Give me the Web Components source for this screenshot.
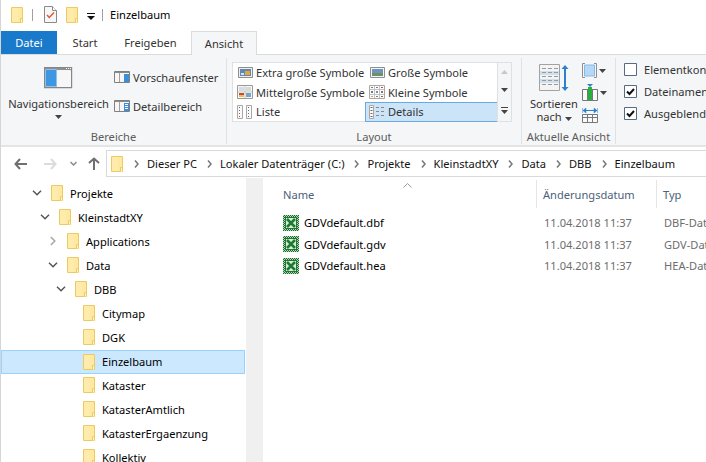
<!doctype html>
<html lang="de">
<head>
<meta charset="utf-8">
<title>Einzelbaum</title>
<style>
  html, body { margin: 0; height: 100%; overflow: hidden; background: #fff; }
  body { font: 11.1px "Noto Sans", sans-serif; }
</style>
</head>
<body>
<win-explorer>
  <title-bar slot="top" heading="Einzelbaum"></title-bar>
  <ribbon-tabs slot="top"></ribbon-tabs>
  <view-ribbon slot="top"></view-ribbon>
  <address-bar slot="top" path="Dieser PC|Lokaler Datenträger (C:)|Projekte|KleinstadtXY|Data|DBB|Einzelbaum"></address-bar>
  <nav-tree slot="left">
    <tree-row level="0" arrow="open">Projekte</tree-row>
    <tree-row level="1" arrow="open">KleinstadtXY</tree-row>
    <tree-row level="2" arrow="closed">Applications</tree-row>
    <tree-row level="2" arrow="open">Data</tree-row>
    <tree-row level="3" arrow="open">DBB</tree-row>
    <tree-row level="4">Citymap</tree-row>
    <tree-row level="4">DGK</tree-row>
    <tree-row level="4" selected>Einzelbaum</tree-row>
    <tree-row level="4">Kataster</tree-row>
    <tree-row level="4">KatasterAmtlich</tree-row>
    <tree-row level="4">KatasterErgaenzung</tree-row>
    <tree-row level="4">Kollektiv</tree-row>
  </nav-tree>
  <file-list slot="right">
    <file-row date="11.04.2018 11:37" type="DBF-Datei">GDVdefault.dbf</file-row>
    <file-row date="11.04.2018 11:37" type="GDV-Datei">GDVdefault.gdv</file-row>
    <file-row date="11.04.2018 11:37" type="HEA-Datei">GDVdefault.hea</file-row>
  </file-list>
</win-explorer>

<script>
const ICONS = {
  folder: `<svg width="13" height="16" viewBox="0 0 13 16"><path d="M.5.5h11v15H.5z" fill="#ffe9a0" stroke="#eccb62"/><path d="M1 1h6v14H1z" fill="#fff0b8" opacity=".5"/><path d="M9.500 15.500v-4h2v4" fill="#fff6d0" stroke="#eccb62"/></svg>`,
  doc: `<svg width="13" height="17" viewBox="0 0 13 17"><path d="M.5.5h8l4 4v12H.5z" fill="#f7f7f7" stroke="#8a8a8a"/><path d="M8.500.5v4h4" fill="#fff" stroke="#8a8a8a"/><path d="M3 9l2.300 2.400L10 6.500" fill="none" stroke="#e4572e" stroke-width="1.500"/></svg>`,
  qat: `<svg width="8" height="7" viewBox="0 0 8 7"><path d="M0 0h8v1H0z" fill="#111"/><path d="M0 3h8L4 7z" fill="#111"/></svg>`,
  nav: `<svg width="29" height="22" viewBox="0 0 29 22"><path d="M.5.5h27v20H.5z" fill="#f4f4f4" stroke="#868686" stroke-width="1.400"/><path d="M1 1h26v2H1z" fill="#8f8f8f"/><path d="M1.500 2.500h11v17h-11z" fill="#3f97e3" stroke="#8ec0ee"/><path d="M13 4h14v16H13z" fill="#f7f7f7"/><path d="M22 1h1v1h-1zM24 1h1v1h-1zM26 1h1v1h-1z" fill="#fff"/></svg>`,
  preview: `<svg width="16" height="12" viewBox="0 0 16 12"><path d="M.5.5h15v11H.5z" fill="#f6f6f6" stroke="#808080"/><path d="M1 1h14v1H1z" fill="#8a8a8a"/><path d="M5.500 2v9" stroke="#a0a0a0"/><path d="M10 3h5v8h-5z" fill="#3a8edb"/></svg>`,
  detail: `<svg width="16" height="12" viewBox="0 0 16 12"><path d="M.5.5h15v11H.5z" fill="#f6f6f6" stroke="#808080"/><path d="M1 1h14v1H1z" fill="#8a8a8a"/><path d="M5.500 2v9" stroke="#a0a0a0"/><path d="M10 3h5v8h-5z" fill="#3a8edb"/><path d="M11 4.500h3M11 6.500h3M11 8.500h3" stroke="#fff"/></svg>`,
  xl: `<svg width="15" height="11" viewBox="0 0 15 11"><path d="M.5.5h14v10H.5z" fill="#f1eee2" stroke="#8a8f94"/><path d="M2 2h11v7H2z" fill="#5d89b8"/><path d="M7 4h5v4H7z" fill="#e9a43a"/><path d="M3 6h3v2H3z" fill="#d8e4ee"/></svg>`,
  large: `<svg width="15" height="11" viewBox="0 0 15 11"><path d="M.5.5h14v10H.5z" fill="#f6f6f6" stroke="#8a8f94"/><path d="M2 2h11v4H2z" fill="#6d94ba"/><path d="M2 6h11v3H2z" fill="#6f8f6a"/></svg>`,
  medium: `<svg width="16" height="14" viewBox="0 0 16 14"><path d="M.5.5h15v13H.5z" fill="#f7f7f7" stroke="#9a9a9a"/><path d="M8 1v12M1 7h14" stroke="#c8c8c8"/><path d="M2 2h5v4H2z" fill="#d4dde6"/><path d="M9 2h5v4H9z" fill="#cfe0d0"/><path d="M2 8h5v2H2z" fill="#c84b3a"/><path d="M9 8h5v4H9z" fill="#7ea3c7"/><path d="M2 10h5v2H2z" fill="#e8c24a"/></svg>`,
  small: `<svg width="16" height="14" viewBox="0 0 16 14"><path d="M.5.500h15v13H.5z" fill="#fbfbfb" stroke="#a8a8a8"/><path d="M5.500 1v12M10.500 1v12M1 4.500h14M1 9.500h14" stroke="#c4c4c4"/><path d="M2 2h2v1H2zM7 2h2v1H7z" fill="#7b7b7b"/><path d="M12 2h2v1h-2z" fill="#c84b3a"/><path d="M2 6h2v2H2zM12 6h2v2h-2z" fill="#7b7b7b"/><path d="M7 6h2v2H7z" fill="#6d94ba"/><path d="M2 11h2v1H2z" fill="#e0a63c"/><path d="M7 11h2v1H7z" fill="#6f8f6a"/><path d="M12 11h2v1h-2z" fill="#c84b3a"/></svg>`,
  list: `<svg width="16" height="14" viewBox="0 0 16 14"><path d="M.5.500h5v13h-5zM9.500.500h5v13h-5z" fill="#fafafa" stroke="#a8a8a8"/><path d="M2 2h1v1H2zM2 5h1v1H2zM11 2h1v1h-1zM11 5h1v1h-1z" fill="#666"/><path d="M2 8h1v1H2zM11 8h1v1h-1z" fill="#c84b3a"/><path d="M2 11h1v1H2zM11 11h1v1h-1z" fill="#666"/></svg>`,
  details: `<svg width="16" height="14" viewBox="0 0 16 14"><path d="M.5.500h4v13h-4z" fill="#fafafa" stroke="#a8a8a8"/><path d="M1.500 2h2v1h-2zM1.500 5h2v1h-2zM1.500 11h2v1h-2z" fill="#666"/><path d="M1.500 8h2v1h-2z" fill="#c84b3a"/><path d="M7 2.500h3M12 2.500h3M7 6.500h3M12 6.500h3M7 10.500h3M12 10.500h3" stroke="#8a8a8a"/></svg>`,
  sort: `<svg width="30" height="28" viewBox="0 0 30 28"><path d="M.5.500h20v26H.5z" fill="#f4f4f4" stroke="#a2a2a2"/><path d="M1 7h19v4H1zM1 15h19v4H1z" fill="#cfe0ee"/><path d="M3 4.500h4M9 4.500h4M15 4.500h4M3 8.500h4M9 8.500h4M15 8.500h4M3 12.500h4M9 12.500h4M15 12.500h4M3 16.500h4M9 16.500h4M15 16.500h4M3 20.500h4M9 20.500h4M15 20.500h4" stroke="#9a9a9a"/><path d="M26 2v24" stroke="#2f80c8" stroke-width="2"/><path d="M22.500 5L26 1l3.500 4zM22.500 23l3.500 4 3.500-4z" fill="#2f80c8"/></svg>`,
  panel: `<svg width="15" height="15" viewBox="0 0 15 15"><path d="M2.500 2h10v11h-10z" fill="#b5d8f7" stroke="#8ab9e3"/><path d="M3 .5H.5v14H3M12 .5h2.500v14H12" fill="none" stroke="#8f8f8f"/></svg>`,
  columns: `<svg width="16" height="17" viewBox="0 0 16 17"><path d="M.5 5.500h15v11H.5z" fill="#fafafa" stroke="#777"/><path d="M5.500 5v12M10.500 5v12" stroke="#777"/><path d="M6 3h4v13H6z" fill="#27b13c"/><path d="M5 0h6L8 3z" fill="#2f80c8"/></svg>`,
  fit: `<svg width="16" height="16" viewBox="0 0 16 16"><path d="M.5 7.500h15v8H.5z" fill="#fafafa" stroke="#777"/><path d="M1 10.500h14M5.500 8v7M10.500 8v7" stroke="#777"/><path d="M1 3.500h14" stroke="#2f80c8"/><path d="M4 1v5L1 3.500zM12 1v5l3-2.500zM.5 1v5M15.500 1v5" fill="#2f80c8" stroke="#2f80c8" stroke-width=".5"/></svg>`,
  up: `<svg width="7" height="4" viewBox="0 0 7 4"><path d="M0 4l3.500-4L7 4z" fill="#c8c8c8"/></svg>`,
  down: `<svg width="7" height="4" viewBox="0 0 7 4"><path d="M0 0h7L3.500 4z" fill="#444"/></svg>`,
  more: `<svg width="7" height="7" viewBox="0 0 7 7"><path d="M0 0h7v1H0z" fill="#444"/><path d="M0 3h7L3.500 7z" fill="#444"/></svg>`,
  back: `<svg width="13" height="12" viewBox="0 0 13 12"><path d="M6 1L1.500 6 6 11M2 6h11" fill="none" stroke="#6f6f6f" stroke-width="2"/></svg>`,
  fwd: `<svg width="13" height="12" viewBox="0 0 13 12"><path d="M7 1l4.500 5L7 11M0 6h11" fill="none" stroke="#dcdcdc" stroke-width="2"/></svg>`,
  recent: `<svg width="7" height="5" viewBox="0 0 7 5"><path d="M.5 1l3 3 3-3" fill="none" stroke="#8a8a8a" stroke-width="1.500"/></svg>`,
  upArrow: `<svg width="12" height="13" viewBox="0 0 12 13"><path d="M1 6l5-4.500L11 6M6 2v11" fill="none" stroke="#6f6f6f" stroke-width="2"/></svg>`,
  crumb: `<svg width="5" height="8" viewBox="0 0 5 8"><path d="M1 .5L4 4 1 7.500" fill="none" stroke="#777" stroke-width="1.500"/></svg>`,
  open: `<svg width="10" height="6" viewBox="0 0 10 6"><path d="M1 .8l4 4 4-4" fill="none" stroke="#555" stroke-width="1.500"/></svg>`,
  closed: `<svg width="6" height="10" viewBox="0 0 6 10"><path d="M.8 1l4 4-4 4" fill="none" stroke="#a6a6a6" stroke-width="1.500"/></svg>`,
  sortCaret: `<svg width="9" height="5" viewBox="0 0 9 5"><path d="M.5 4.500l4-4 4 4" fill="none" stroke="#9a9a9a"/></svg>`,
  check: `<svg width="13" height="13" viewBox="0 0 13 13"><path d="M.5.500h12v12H.5z" fill="#fff" stroke="#5a6a80"/><path d="M3 6.500l2.500 2.500 4.500-5" fill="none" stroke="#111" stroke-width="2"/></svg>`,
  uncheck: `<svg width="13" height="13" viewBox="0 0 13 13"><path d="M.5.500h12v12H.5z" fill="#fff" stroke="#5a6a80"/></svg>`,
  excel: `<svg width="16" height="16" viewBox="0 0 16 16" shape-rendering="crispEdges"><defs><pattern id="d" width="2" height="2" patternUnits="userSpaceOnUse"><path d="M0 0h2v2H0z" fill="#146c2e"/><path d="M0 0h1v1H0zM1 1h1v1H1z" fill="#b8d8b0"/></pattern></defs><path d="M0 0h16v16H0z" fill="url(#d)"/><path d="M2 2h12v12H2z" fill="#1c7a34"/><path d="M3 3h10v10H3z" fill="#d9ecd4"/><path d="M4 4l8 8M12 4l-8 8" stroke="#1c7a34" stroke-width="2.500" shape-rendering="auto"/></svg>`
};

class UiIcon extends HTMLElement {
  connectedCallback() {
    if (this.shadowRoot) return;
    this.attachShadow({ mode: "open" }).innerHTML =
      `<style>:host{display:inline-flex;flex:none;line-height:0}</style>${ICONS[this.getAttribute("name")]}`;
  }
}

class WinExplorer extends HTMLElement {
  constructor() {
    super();
    this.attachShadow({ mode: "open" }).innerHTML = `
      <style>
        :host{display:flex;flex-direction:column;width:706px;height:462px;overflow:hidden;box-sizing:border-box;
          border-left:1px solid #d6d6d6;color:#000;background:#fff}
        .body{flex:1;display:grid;grid-template-columns:244px 18px 1fr;min-height:0}
        .track{background:#f0f0f0;margin-left:1px}
        .left{overflow:hidden;min-width:0}
      </style>
      <slot name="top"></slot>
      <div class="body">
        <div class="left"><slot name="left"></slot></div>
        <div class="track"></div>
        <div><slot name="right"></slot></div>
      </div>`;
  }
}

class TitleBar extends HTMLElement {
  connectedCallback() {
    this.attachShadow({ mode: "open" }).innerHTML = `
      <style>
        :host{display:flex;align-items:center;height:31px;padding:0 0 2px 10px;box-sizing:border-box}
        .sep{width:1px;height:12px;background:#a0a0a0}
      </style>
      <ui-icon name="folder"></ui-icon><i class="sep" style="margin:0 11px 0 8px"></i>
      <ui-icon name="doc"></ui-icon><ui-icon name="folder" style="margin-left:9px"></ui-icon>
      <ui-icon name="qat" style="margin:4px 0 0 8px"></ui-icon><i class="sep" style="margin:0 7px 0 7px"></i>
      <span>${this.getAttribute("heading")}</span>`;
  }
}

class RibbonTabs extends HTMLElement {
  connectedCallback() {
    this.attachShadow({ mode: "open" }).innerHTML = `
      <style>
        :host{display:flex;height:24px;box-sizing:border-box;border-bottom:1px solid #dadbdc;color:#333}
        div{display:flex;align-items:center;justify-content:center;height:23px;box-sizing:border-box}
        .file{width:56px;background:#1979ca;color:#fff}
        .start{width:56px}
        .share{width:78px;padding-right:3px}
        .view{width:66px;height:24px;background:#f5f6f7;border:1px solid #dadbdc;border-bottom:0}
      </style>
      <div class="file">Datei</div><div class="start">Start</div><div class="share">Freigeben</div><div class="view">Ansicht</div>`;
  }
}

class ViewRibbon extends HTMLElement {
  connectedCallback() {
    this.attachShadow({ mode: "open" }).innerHTML = `
      <style>
        :host{display:grid;grid-template-columns:226px 295px 94px 1fr;height:92px;box-sizing:border-box;
          background:#f5f6f7;border-bottom:2px solid #e4e5e6;color:#333;overflow:hidden;white-space:nowrap}
        .group{display:flex;flex-direction:column;margin:3px 0 1px;border-right:1px solid #e0e1e2;min-width:0}
        .main{flex:1;display:flex;min-height:0}
        .label{height:20px;line-height:15px;display:flex;align-items:flex-end;justify-content:center;color:#5c5c5c}
        .big{width:113px;display:flex;flex-direction:column;align-items:center;padding:9px 0 0 2px;box-sizing:border-box}
        .big .t{margin-top:7px;line-height:16px}
        .rows{display:flex;flex-direction:column;gap:17px;padding-top:13px}
        .r{display:flex;align-items:center;gap:3px;height:12px}
        .gallery{display:flex;margin:4px 0 0 5px;height:60px}
        .cells{width:265px;display:grid;grid-template-columns:132px 133px;grid-auto-rows:19.5px;background:#fff;
          border:1px solid #dfe0e1;border-right:0;box-sizing:border-box}
        .cell{display:flex;align-items:center;box-sizing:border-box;padding-left:4px}
        .cell ui-icon{width:16px;justify-content:center;margin-right:3px}
        .cell.on{background:#cce4f7;border:1px solid #6aa9e5;padding-left:3px}
        .scroll{width:15px;display:flex;flex-direction:column;align-items:center;justify-content:space-around;
          border:1px solid #dfe0e1;box-sizing:border-box}
        .sort{width:58px;display:flex;flex-direction:column;align-items:center;padding:6px 0 0 6px;box-sizing:border-box}
        .sort .t{text-align:center;line-height:13px;margin-top:5px}
        .tools{display:flex;flex-direction:column;gap:5px;padding:4px 0 0 2px}
        .tool{display:flex;align-items:center;gap:2px;height:17px}
        .checks{display:flex;flex-direction:column;gap:9px;padding:8px 0 0 8px}
        .check{display:flex;align-items:center;gap:7px;height:13px}
      </style>
      <section class="group">
        <div class="main">
          <div class="big"><ui-icon name="nav"></ui-icon><div class="t">Navigationsbereich</div><ui-icon name="down" style="margin-top:3px"></ui-icon></div>
          <div class="rows">
            <div class="r"><ui-icon name="preview"></ui-icon>Vorschaufenster</div>
            <div class="r"><ui-icon name="detail"></ui-icon>Detailbereich</div>
          </div>
        </div>
        <div class="label">Bereiche</div>
      </section>
      <section class="group">
        <div class="main">
          <div class="gallery">
            <div class="cells">
              <div class="cell"><ui-icon name="xl"></ui-icon>Extra große Symbole</div>
              <div class="cell"><ui-icon name="large"></ui-icon>Große Symbole</div>
              <div class="cell"><ui-icon name="medium"></ui-icon>Mittelgroße Symbole</div>
              <div class="cell"><ui-icon name="small"></ui-icon>Kleine Symbole</div>
              <div class="cell"><ui-icon name="list"></ui-icon>Liste</div>
              <div class="cell on"><ui-icon name="details"></ui-icon>Details</div>
            </div>
            <div class="scroll"><ui-icon name="up"></ui-icon><ui-icon name="down"></ui-icon><ui-icon name="more"></ui-icon></div>
          </div>
        </div>
        <div class="label">Layout</div>
      </section>
      <section class="group">
        <div class="main">
          <div class="sort"><ui-icon name="sort"></ui-icon><div class="t">Sortieren<br>nach <ui-icon name="down"></ui-icon></div></div>
          <div class="tools">
            <div class="tool"><ui-icon name="panel"></ui-icon><ui-icon name="down"></ui-icon></div>
            <div class="tool"><ui-icon name="columns"></ui-icon><ui-icon name="down"></ui-icon></div>
            <div class="tool"><ui-icon name="fit"></ui-icon></div>
          </div>
        </div>
        <div class="label">Aktuelle Ansicht</div>
      </section>
      <section class="checks">
        <div class="check"><ui-icon name="uncheck"></ui-icon>Elementkontrollkästchen</div>
        <div class="check"><ui-icon name="check"></ui-icon>Dateinamenerweiterungen</div>
        <div class="check"><ui-icon name="check"></ui-icon>Ausgeblendete Elemente</div>
      </section>`;
  }
}

class AddressBar extends HTMLElement {
  connectedCallback() {
    const crumbs = this.getAttribute("path").split("|")
      .map((p) => `<ui-icon name="crumb"></ui-icon><span>${p}</span>`).join("");
    this.attachShadow({ mode: "open" }).innerHTML = `
      <style>
        :host{display:flex;align-items:center;height:31px;padding:2px 0 0 13px;box-sizing:border-box}
        .box{flex:1;display:flex;align-items:center;height:27px;margin-left:6px;padding-left:4px;
          border:1px solid #d9d9d9;border-right:0;box-sizing:border-box;white-space:nowrap;overflow:hidden;color:#111}
        .box ui-icon{margin-right:8px}
        .box span{margin-right:10px}
        .box > ui-icon:first-child{margin-right:10px}
      </style>
      <ui-icon name="back"></ui-icon>
      <ui-icon name="fwd" style="margin-left:17px"></ui-icon>
      <ui-icon name="recent" style="margin-left:13px"></ui-icon>
      <ui-icon name="upArrow" style="margin-left:11px"></ui-icon>
      <div class="box"><ui-icon name="folder"></ui-icon>${crumbs}</div>`;
  }
}

class NavTree extends HTMLElement {
  constructor() {
    super();
    this.attachShadow({ mode: "open" }).innerHTML = `
      <style>:host{display:block;padding-top:4px}</style><slot></slot>`;
  }
}

class TreeRow extends HTMLElement {
  connectedCallback() {
    const level = +this.getAttribute("level");
    const arrow = this.getAttribute("arrow");
    this.attachShadow({ mode: "open" }).innerHTML = `
      <style>
        :host{display:flex;align-items:center;height:24px;box-sizing:border-box;white-space:nowrap;
          padding:0 0 2px ${31 + level * 8}px}
        :host([selected]){background:#cce8ff;border:1px solid #99d1ff;padding:0 0 1px ${30 + level * 8}px}
        .tw{width:19px;display:flex;flex:none;justify-content:flex-start}
        .tw ui-icon[name=closed]{margin-left:2px}
        .ic{margin-right:6px}
      </style>
      <div class="tw">${arrow ? `<ui-icon name="${arrow}"></ui-icon>` : ""}</div>
      <ui-icon class="ic" name="folder"></ui-icon><slot></slot>`;
  }
}

class FileList extends HTMLElement {
  constructor() {
    super();
    this.attachShadow({ mode: "open" }).innerHTML = `
      <style>
        :host{display:block;white-space:nowrap;overflow:hidden;height:100%}
        .head{display:grid;grid-template-columns:274px 120px 1fr;height:30px;color:#4c607a;position:relative}
        .head div{display:flex;align-items:center;padding-left:6px;border-right:1px solid #e5e5e5;box-sizing:border-box;margin-top:2px}
        .head div:first-of-type{padding-left:20px}
        .head div:last-child{border:0}
        ui-icon{position:absolute;left:140px;top:5px}
        .rows{padding-top:4px}
      </style>
      <div class="head"><ui-icon name="sortCaret"></ui-icon><div>Name</div><div>Änderungsdatum</div><div>Typ</div></div>
      <div class="rows"><slot></slot></div>`;
  }
}

class FileRow extends HTMLElement {
  connectedCallback() {
    this.attachShadow({ mode: "open" }).innerHTML = `
      <style>
        :host{display:grid;grid-template-columns:274px 120px 1fr;height:21.5px;align-items:center}
        .name{display:flex;align-items:center;gap:5px;padding-left:20px}
        .meta{padding-left:7px;color:#6d6d6d}
      </style>
      <div class="name"><ui-icon name="excel"></ui-icon><slot></slot></div>
      <div class="meta">${this.getAttribute("date")}</div>
      <div class="meta">${this.getAttribute("type")}</div>`;
  }
}

customElements.define("ui-icon", UiIcon);
customElements.define("win-explorer", WinExplorer);
customElements.define("title-bar", TitleBar);
customElements.define("ribbon-tabs", RibbonTabs);
customElements.define("view-ribbon", ViewRibbon);
customElements.define("address-bar", AddressBar);
customElements.define("nav-tree", NavTree);
customElements.define("tree-row", TreeRow);
customElements.define("file-list", FileList);
customElements.define("file-row", FileRow);
</script>
</body>
</html>
